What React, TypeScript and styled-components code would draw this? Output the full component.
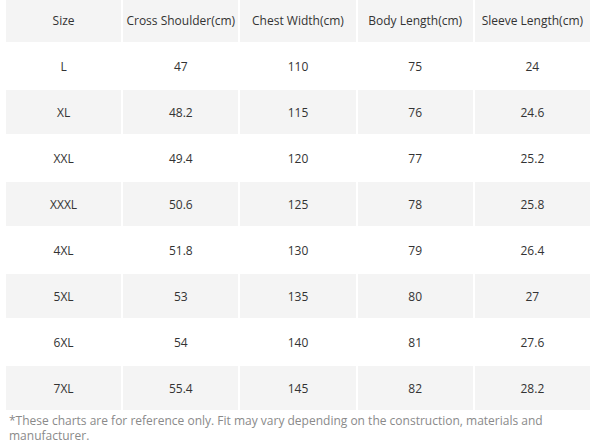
import styled, { createGlobalStyle } from 'styled-components';

const GlobalStyle = createGlobalStyle`
  body {
    margin: 0;
    background: #fff;
    font-family: "Open Sans", "Liberation Sans", sans-serif;
  }
`;

const Wrapper = styled.div`
  width: 593px;
  padding: 0 1px 0 4px;
  box-sizing: border-box;
  margin-top: -4px;
`;

const Table = styled.table`
  width: 588px;
  border-collapse: separate;
  border-spacing: 2px;
  table-layout: fixed;
`;

const Row = styled.tr<{ $shaded: boolean }>`
  background: ${props => (props.$shaded ? '#f4f4f4' : '#fff')};
`;

const Cell = styled.td`
  height: 44px;
  padding: 0;
  text-align: center;
  vertical-align: middle;
  font-size: 12px;
  color: #333;
`;

const Note = styled.p`
  margin: 0;
  padding: 1px 6px 0 5px;
  font-size: 12px;
  line-height: 15px;
  color: #8a8a8a;
`;

const header = ['Size', 'Cross Shoulder(cm)', 'Chest Width(cm)', 'Body Length(cm)', 'Sleeve Length(cm)'];

const rows = [
  ['L', '47', '110', '75', '24'],
  ['XL', '48.2', '115', '76', '24.6'],
  ['XXL', '49.4', '120', '77', '25.2'],
  ['XXXL', '50.6', '125', '78', '25.8'],
  ['4XL', '51.8', '130', '79', '26.4'],
  ['5XL', '53', '135', '80', '27'],
  ['6XL', '54', '140', '81', '27.6'],
  ['7XL', '55.4', '145', '82', '28.2'],
];

export default function App() {
  return (
    <>
      <GlobalStyle />
      <Wrapper>
        <Table>
          <tbody>
            <Row $shaded>
              {header.map(h => (
                <Cell key={h}>{h}</Cell>
              ))}
            </Row>
            {rows.map((r, i) => (
              <Row key={r[0]} $shaded={i % 2 === 1}>
                {r.map((v, j) => (
                  <Cell key={j}>{v}</Cell>
                ))}
              </Row>
            ))}
          </tbody>
        </Table>
        <Note>
          *These charts are for reference only. Fit may vary depending on the construction, materials and
          manufacturer.
        </Note>
      </Wrapper>
    </>
  );
}
